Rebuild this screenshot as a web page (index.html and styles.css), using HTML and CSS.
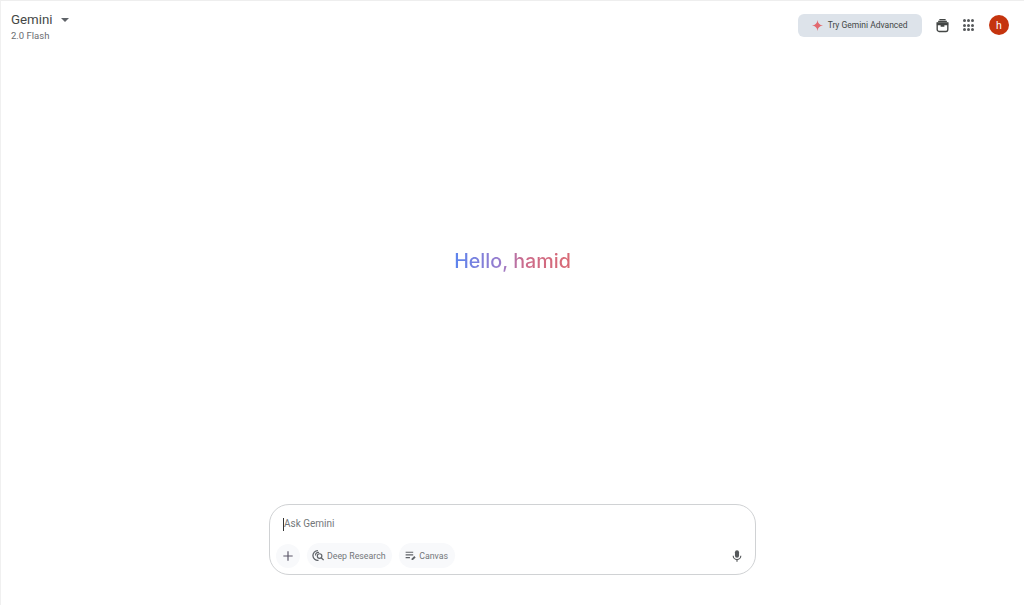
FILE: index.html
```html
<!DOCTYPE html>
<html lang="en">
<head>
    <meta charset="UTF-8">
    <meta name="viewport" content="width=device-width, initial-scale=1.0">
    <title>Gemini</title>
    <link rel="stylesheet" href="styles.css">
</head>
<body>
    <div class="app">
        <!-- Top Bar -->
        <header class="topbar">
            <div class="model-picker">
                <div class="model-row">
                    <span class="brand">Gemini</span>
                    <span class="caret"></span>
                </div>
                <span class="model-name">2.0 Flash</span>
            </div>
            <div class="top-actions">
                <button class="upgrade-btn">
                    <svg class="spark" viewBox="0 0 24 24" width="11" height="11">
                        <path d="M12 0c.6 7 4.600 11.200 12 12-7.400.8-11.400 5-12 12-.6-7-4.600-11.200-12-12 7.400-.8 11.400-5 12-12z" fill="#e2696f"/>
                    </svg>
                    Try Gemini Advanced
                </button>
                <svg class="top-icon" viewBox="0 0 24 24" width="15" height="15">
                    <path d="M7 1.500h10v2H7zM5 4.500h14v2H5z" fill="#444746"/>
                    <path d="M3.500 8h17v10.500a3 3 0 0 1-3 3h-11a3 3 0 0 1-3-3z" fill="none" stroke="#444746" stroke-width="2.200"/>
                    <path d="M3 7.500h18v4H3zM9 11.500h6v2.500H9z" fill="#444746"/>
                </svg>
                <div class="apps-grid">
                    <i></i><i></i><i></i><i></i><i></i><i></i><i></i><i></i><i></i>
                </div>
                <div class="avatar">h</div>
            </div>
        </header>

        <!-- Greeting -->
        <main class="greeting-area">
            <h1 class="greeting">Hello, hamid</h1>
        </main>

        <!-- Input Box -->
        <section class="prompt-box">
            <div class="prompt-text"><span class="text-cursor"></span>Ask Gemini</div>
            <div class="prompt-tools">
                <button class="round-btn">
                    <svg viewBox="0 0 24 24" width="14" height="14">
                        <path d="M12 4v16M4 12h16" stroke="#5a5668" stroke-width="2" fill="none"/>
                    </svg>
                </button>
                <button class="chip">
                    <svg viewBox="0 0 24 24" width="13" height="13">
                        <path d="M11 3a9 9 0 1 0 1 17.900" fill="none" stroke="#5f6368" stroke-width="2.400"/>
                        <path d="M6.500 12A5 5 0 0 1 13 6.500" fill="none" stroke="#5f6368" stroke-width="2"/>
                        <circle cx="14" cy="13" r="4.200" fill="none" stroke="#5f6368" stroke-width="2.200"/>
                        <path d="M17 16l4.500 4.500" stroke="#5f6368" stroke-width="2.400"/>
                    </svg>
                    Deep Research
                </button>
                <button class="chip">
                    <svg viewBox="0 0 24 24" width="13" height="13">
                        <path d="M3 6h14M3 11h14M3 16h8" stroke="#5f6368" stroke-width="2.200" fill="none"/>
                        <path d="M14 20.500v-2.500l5-5 2.500 2.500-5 5z" fill="#5f6368"/>
                    </svg>
                    Canvas
                </button>
                <svg class="mic" viewBox="0 0 24 24" width="14" height="14">
                    <rect x="8.500" y="2" width="7" height="13" rx="3.500" fill="#55585a"/>
                    <path d="M5.500 11.500a6.500 6.500 0 0 0 13 0" fill="none" stroke="#55585a" stroke-width="2"/>
                    <path d="M12 18v4" stroke="#55585a" stroke-width="2"/>
                </svg>
            </div>
        </section>
    </div>
</body>
</html>
```

FILE: styles.css
```css
/* General Styles */
html, body {
    margin: 0;
    padding: 0;
    height: 100%;
    overflow: hidden;
}

body {
    font-family: Roboto, Arial, sans-serif;
    background: #fff;
    color: #1f1f1f;
}

button {
    font-family: inherit;
    border: none;
    cursor: pointer;
}

.app {
    height: 605px;
    box-sizing: border-box;
    display: flex;
    flex-direction: column;
    align-items: center;
    border-top: 1px solid #eeeeee;
    border-left: 1px solid #f0f0f0;
    padding-bottom: 30px;
}

/* Top Bar */
.topbar {
    align-self: stretch;
    display: flex;
    justify-content: space-between;
    padding: 11px 15px 0 10px;
}

.model-picker {
    display: flex;
    flex-direction: column;
    gap: 1px;
}

.model-row {
    display: flex;
    align-items: center;
    gap: 8px;
}

.brand {
    font-size: 13.300px;
    line-height: 16px;
    color: #444746;
}

.caret {
    width: 0;
    height: 0;
    border-left: 4px solid transparent;
    border-right: 4px solid transparent;
    border-top: 4px solid #5f6368;
}

.model-name {
    font-size: 9.500px;
    line-height: 14px;
    color: #6a6d70;
}

.top-actions {
    display: flex;
    align-items: center;
    height: 26px;
}

.upgrade-btn {
    width: 124px;
    height: 23px;
    margin-right: 13px;
    display: flex;
    align-items: center;
    justify-content: center;
    gap: 5px;
    background: #dde3ea;
    border-radius: 6px;
    font-size: 8.500px;
    color: #444746;
}

.apps-grid {
    display: grid;
    grid-template-columns: repeat(3, 3px);
    gap: 1.200px;
    margin: 0 15px 0 13px;
}

.apps-grid i {
    width: 3px;
    height: 3px;
    border-radius: 50%;
    background: #55585a;
}

.avatar {
    width: 20px;
    height: 20px;
    border-radius: 50%;
    background: #c5340e;
    color: #fff;
    font-size: 10.500px;
    display: flex;
    align-items: center;
    justify-content: center;
}

/* Greeting */
.greeting-area {
    flex: 1;
    align-self: stretch;
    display: flex;
    justify-content: center;
    padding-top: 205px;
}

.greeting {
    margin: 0;
    font-family: Inter, Roboto, sans-serif;
    font-size: 19.700px;
    line-height: 26px;
    height: 26px;
    font-weight: 500;
    background: linear-gradient(90deg, #5b84ee 0%, #9a7ccc 40%, #cc6a8a 60%, #d96a74 100%);
    -webkit-background-clip: text;
    background-clip: text;
    color: transparent;
}

/* Input Box */
.prompt-box {
    width: 487px;
    height: 71px;
    box-sizing: border-box;
    border: 1px solid #d0d2d4;
    border-radius: 20px;
    padding: 12px 7px 6px 6px;
    display: flex;
    flex-direction: column;
    justify-content: space-between;
}

.prompt-text {
    display: flex;
    align-items: center;
    margin-left: 7px;
    font-size: 10px;
    line-height: 14px;
    color: #74777a;
}

.text-cursor {
    width: 1px;
    height: 13px;
    background: #333;
}

.prompt-tools {
    display: flex;
    align-items: center;
    gap: 7px;
}

.round-btn {
    width: 24px;
    height: 24px;
    padding: 0;
    border-radius: 50%;
    background: #f8f9fb;
    display: flex;
    align-items: center;
    justify-content: center;
}

.chip {
    height: 25px;
    padding: 0 6.500px 0 5px;
    border-radius: 13px;
    background: #f8f9fb;
    display: flex;
    align-items: center;
    gap: 2px;
    font-size: 8.800px;
    color: #74777a;
}

.mic {
    margin-left: auto;
    margin-right: 4px;
}
```
